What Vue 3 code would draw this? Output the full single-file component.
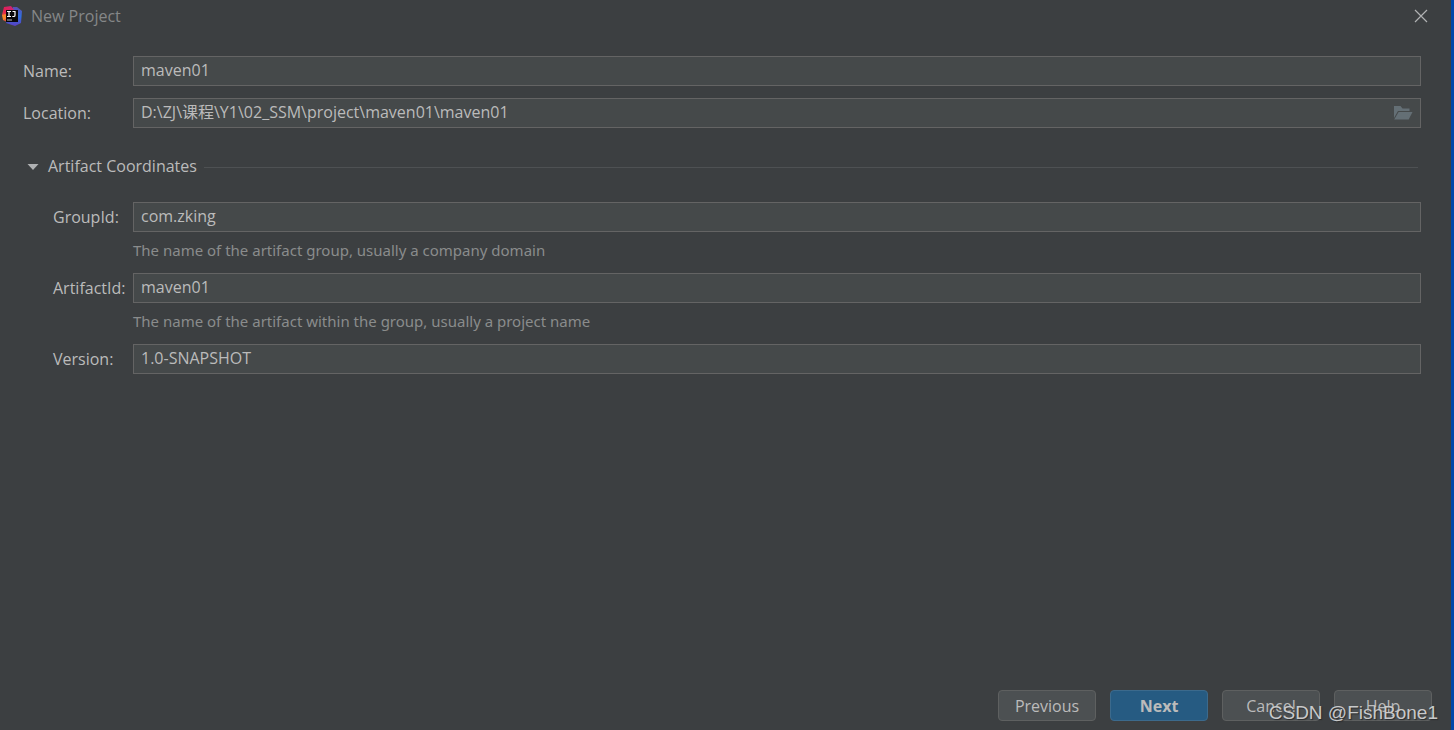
<script setup>
import { ref } from 'vue'

const name = ref('maven01')
const location = ref('D:\\ZJ\\课程\\Y1\\02_SSM\\project\\maven01\\maven01')
const expanded = ref(true)
const coordinates = ref([
  { id: 'group', label: 'GroupId:', value: 'com.zking', hint: 'The name of the artifact group, usually a company domain' },
  { id: 'artifact', label: 'ArtifactId:', value: 'maven01', hint: 'The name of the artifact within the group, usually a project name' },
  { id: 'version', label: 'Version:', value: '1.0-SNAPSHOT', hint: '' },
])
</script>

<template>
  <div class="dialog">
    <header class="titlebar">
      <svg class="logo" viewBox="0 0 20 20" aria-hidden="true">
        <defs>
          <linearGradient id="logo-blue" x1="0" y1="0" x2="0" y2="1">
            <stop offset="0" stop-color="#5a4fb4" />
            <stop offset="0.5" stop-color="#2f6fe0" />
            <stop offset="1" stop-color="#5a3fc0" />
          </linearGradient>
          <linearGradient id="logo-red" x1="0" y1="1" x2="1" y2="0">
            <stop offset="0" stop-color="#f2762b" />
            <stop offset="0.45" stop-color="#e3204f" />
            <stop offset="1" stop-color="#c32683" />
          </linearGradient>
        </defs>
        <path d="M11 1 L15 1 L20 5 L19 17 L13 20 L4 17 L8 8 Z" fill="url(#logo-blue)" />
        <path d="M2 1 L9 0 L13 5 L5 16 L1 14 L2 10 L0 9 Z" fill="url(#logo-red)" />
        <path d="M0 9 L4 8 L4 13 L1 14 Z" fill="#f5852a" />
        <rect x="4" y="4" width="12" height="12" fill="#08070b" />
        <path d="M5 5.5 h4 M7 5.5 v5 M5 10.5 h4 M10.5 5.5 h2.5 v3.7 q0 1.3 -1.3 1.3 h-1.4" fill="none" stroke="#fff" stroke-width="1.2" />
        <path d="M5 14 h5" stroke="#bbb" stroke-width="1" />
      </svg>
      <h1 class="title">New Project</h1>
      <button class="close" type="button" aria-label="Close">
        <svg viewBox="0 0 14 14" aria-hidden="true"><path d="M1 1 L13 13 M13 1 L1 13" /></svg>
      </button>
    </header>

    <main class="form">
      <div class="row">
        <label for="name">Name:</label>
        <input id="name" v-model="name" class="field" type="text" spellcheck="false">
      </div>
      <div class="row">
        <label for="location">Location:</label>
        <div class="field browse">
          <input id="location" v-model="location" type="text" spellcheck="false">
          <button type="button" aria-label="Browse">
            <svg viewBox="0 0 20 16" aria-hidden="true">
              <path d="M1 13 V1 H7.5 L9.5 3.5 H16.5 V6 H5 Z" />
              <path d="M5.6 7 H19.5 L15.7 14.5 H1.2 Z" />
            </svg>
          </button>
        </div>
      </div>

      <button class="section" type="button" :aria-expanded="expanded" @click="expanded = !expanded">
        <svg viewBox="0 0 12 8" :class="{ folded: !expanded }" aria-hidden="true"><path d="M0.5 1 H11.5 L6 7 Z" /></svg>
        <span>Artifact Coordinates</span>
      </button>

      <div v-if="expanded" class="coordinates">
        <div v-for="item in coordinates" :key="item.id" class="row">
          <label :for="item.id">{{ item.label }}</label>
          <input :id="item.id" v-model="item.value" class="field" type="text" spellcheck="false">
          <p v-if="item.hint" class="hint">{{ item.hint }}</p>
        </div>
      </div>
    </main>

    <footer class="actions">
      <button type="button">Previous</button>
      <button type="button" class="primary">Next</button>
      <button type="button">Cancel</button>
      <button type="button">Help</button>
    </footer>
    <span class="watermark">CSDN @FishBone1</span>
  </div>
</template>

<style>
body {
  margin: 0;
  background: #3c3f41;
}
</style>

<style scoped>
.dialog {
  position: relative;
  box-sizing: border-box;
  min-height: 100vh;
  display: flex;
  flex-direction: column;
  border-right: 3px solid #0046a8;
  background: #3c3f41;
  color: #bbbbbb;
  font: 16px/20px "Open Sans", "Noto Sans CJK SC", sans-serif;
}
button,
input {
  font: inherit;
  color: inherit;
}
.titlebar {
  display: flex;
  align-items: center;
  height: 32px;
  padding: 0 23px 0 2px;
}
.logo {
  width: 20px;
  height: 20px;
}
.title {
  flex: 1;
  margin: 0 0 0 9px;
  font-size: 16px;
  font-weight: 400;
  color: #858788;
}
.close {
  display: flex;
  padding: 0;
  border: 0;
  background: none;
}
.close svg {
  width: 14px;
  height: 14px;
  fill: none;
  stroke: #b0b2b3;
  stroke-width: 1.2;
}
.form {
  flex: 1;
  padding: 24px 30px 0 23px;
}
.row {
  display: grid;
  grid-template-columns: 110px 1fr;
  align-items: center;
  margin-bottom: 12px;
}
.field {
  box-sizing: border-box;
  width: 100%;
  height: 30px;
  padding: 0 7px 2px;
  border: 1px solid #646464;
  border-radius: 0;
  outline: 0;
  background: #45494a;
}
.browse {
  display: flex;
  align-items: center;
}
.browse input {
  flex: 1;
  min-width: 0;
  padding: 0;
  border: 0;
  outline: 0;
  background: none;
}
.browse button {
  display: flex;
  padding: 2px 0 0;
  border: 0;
  background: none;
}
.browse svg {
  width: 20px;
  height: 16px;
  fill: #646f75;
}
.section {
  display: flex;
  align-items: center;
  width: 100%;
  margin: 28px 0 24px;
  padding: 0 3px 0 4px;
  border: 0;
  background: none;
}
.section svg {
  width: 12px;
  height: 8px;
  margin-right: 9px;
  fill: #afb1b3;
}
.section span {
  padding-bottom: 2px;
}
.section .folded {
  transform: rotate(-90deg);
}
.section::after {
  content: "";
  flex: 1;
  margin-left: 7px;
  border-top: 1px solid #4e5153;
}
.coordinates .row {
  grid-template-columns: 80px 1fr;
  margin: 0 0 13px 30px;
}
.hint {
  grid-column: 2;
  margin: 8px 0 0;
  font: 15px/20px "Noto Sans", sans-serif;
  color: #8a8c8c;
}
.actions {
  display: flex;
  justify-content: flex-end;
  gap: 14px;
  padding: 0 19px 9px;
}
.actions button {
  box-sizing: border-box;
  width: 98px;
  height: 31px;
  padding: 0;
  border: 1px solid #5e6060;
  border-radius: 4px;
  background: #4c5052;
}
.actions .primary {
  border-color: #3c6a8c;
  background: #265b82;
  font-weight: 700;
}
.watermark {
  position: absolute;
  right: 13px;
  bottom: 5px;
  font: 19px/24px "Liberation Sans", Arial, sans-serif;
  color: #c8c9ca;
  text-shadow: 1px 1px 1px #2a2c2d;
  pointer-events: none;
}
</style>
